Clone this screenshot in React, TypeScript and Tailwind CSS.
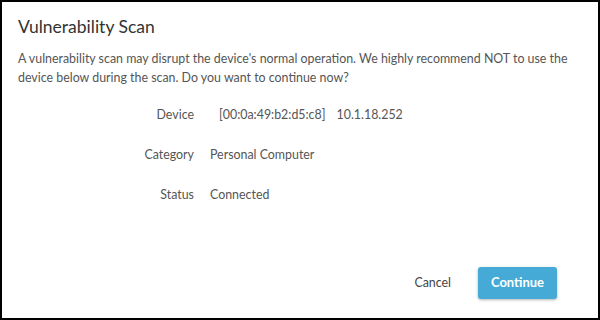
import React from "react";

export default function App() {
  const rows: [string, React.ReactNode][] = [
    [
      "Device",
      <span className="flex gap-[11px] pl-[9px]">
        <span>[00:0a:49:b2:d5:c8]</span>
        <span>10.1.18.252</span>
      </span>,
    ],
    ["Category", "Personal Computer"],
    ["Status", "Connected"],
  ];
  return (
    <div
      className="w-[600px] h-[320px] bg-white border-2 border-black flex flex-col"
      style={{ fontFamily: "Lato, 'Open Sans', sans-serif" }}
    >
      <div className="px-4 pt-[14px]">
        <h1 className="text-[17.5px] leading-[22px] text-[#333]">Vulnerability Scan</h1>
        <p className="mt-[11px] text-[12.4px] leading-[19px] text-[#555]">
          A vulnerability scan may disrupt the device's normal operation. We highly recommend NOT to use the device below during the scan. Do you want to continue now?
        </p>
      </div>
      <div className="mt-[19px] flex flex-col gap-[23px] text-[12.4px] leading-[17px] text-[#555]">
        {rows.map(([k, v]) => (
          <div key={k} className="flex">
            <div className="w-[192px] text-right">{k}</div>
            <div className="ml-[16px]">{v}</div>
          </div>
        ))}
      </div>
      <div className="mt-auto mb-[19px] mr-[41px] flex justify-end items-center">
        <button className="text-[12.4px] text-[#444] mr-[27px]">Cancel</button>
        <button className="w-[79px] h-[32px] rounded-[3px] bg-[#45abd6] text-white font-bold text-[13px] shadow-[0_1px_3px_rgba(0,0,0,0.3)]">
          Continue
        </button>
      </div>
    </div>
  );
}
